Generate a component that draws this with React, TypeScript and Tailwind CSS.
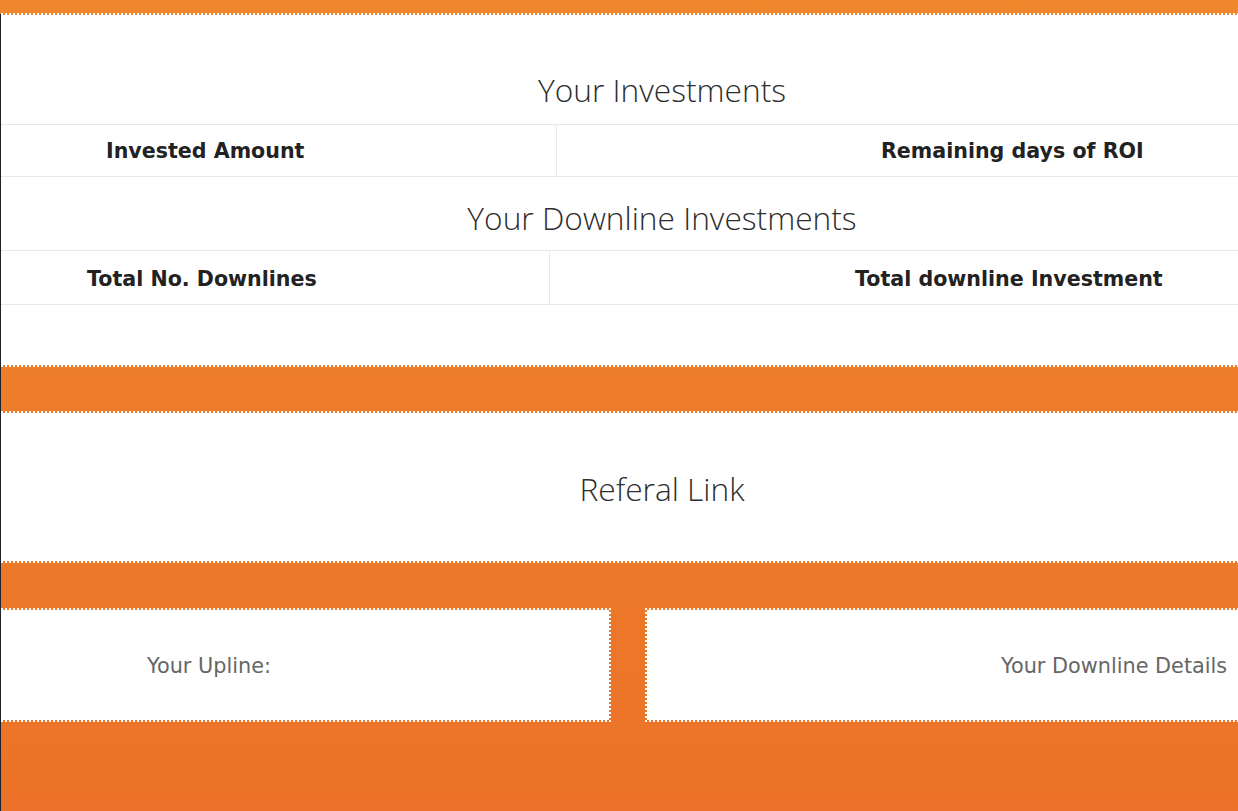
import React from "react";

const dotted = "border-dotted border-white bg-clip-padding";
const headFont = { fontFamily: '"Open Sans", "Noto Sans", sans-serif' };
const bodyFont = { fontFamily: '"DejaVu Sans", Verdana, sans-serif' };

export default function App() {
  return (
    <div className="w-[1238px] h-[811px] overflow-hidden bg-gradient-to-b from-[#ef872d] to-[#eb7228] flex flex-col">
      <div className="h-[13px] shrink-0" />
      <div className="flex flex-1">
        <div className="w-[1px] shrink-0 mt-[1px] bg-[#1d232b]" />
        <div className="w-[1322px] shrink-0 flex flex-col">
          {/* Section 1 */}
          <div className={`bg-white border-y-2 ${dotted} h-[354px] flex flex-col`}>
            <div className="pt-[58px] pb-[17px] text-center text-[31.7px] leading-[34px] font-light text-[#2e2e2e]" style={headFont}>
              Your Investments
            </div>
            <div className="flex h-[53px] border-y border-[#e6e8ec] text-[20.6px] font-bold text-[#222]" style={bodyFont}>
              <div className="w-[556px] border-r border-[#e6e8ec] pl-[105px] pt-[1px] flex items-center">Invested Amount</div>
              <div className="flex-1 pl-[324px] pt-[1px] flex items-center">Remaining days of ROI</div>
            </div>
            <div className="pt-[24px] pb-[15px] text-center text-[31.7px] leading-[34px] font-light text-[#2e2e2e]" style={headFont}>
              Your Downline Investments
            </div>
            <div className="flex h-[55px] border-y border-[#e6e8ec] text-[20.6px] font-bold text-[#222]" style={bodyFont}>
              <div className="w-[549px] border-r border-[#e6e8ec] pl-[86px] pt-[3px] flex items-center">Total No. Downlines</div>
              <div className="flex-1 pl-[305px] pt-[3px] flex items-center">Total downline Investment</div>
            </div>
          </div>
          <div className="h-[44px] shrink-0" />
          {/* Section 2 */}
          <div className={`bg-white border-y-2 ${dotted} h-[152px] flex items-center justify-center`}>
            <div className="text-[31.7px] leading-[34px] font-light text-[#2e2e2e] mt-[3px]" style={headFont}>
              Referal Link
            </div>
          </div>
          <div className="h-[45px] shrink-0" />
          {/* Section 3 */}
          <div className="flex gap-[34px] h-[114px] text-[20.8px] text-[#666]" style={bodyFont}>
            <div className={`w-[610px] bg-white border-y-2 border-r-2 ${dotted} flex items-center pl-[146px] pt-[4px]`}>Your Upline:</div>
            <div className={`flex-1 bg-white border-2 ${dotted} flex items-center pl-[354px] pt-[4px]`}>Your Downline Details</div>
          </div>
        </div>
      </div>
    </div>
  );
}
